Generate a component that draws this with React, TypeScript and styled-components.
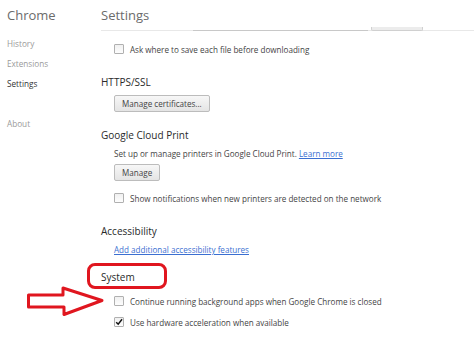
import styled, { createGlobalStyle } from 'styled-components'

const GlobalStyle = createGlobalStyle`
  html, body {
    margin: 0;
    padding: 0;
    background: #ffffff;
  }
  body {
    font-family: "Open Sans", "Noto Sans", sans-serif;
    color: #333;
    overflow: hidden;
  }
`

function Checkbox({ checked }: { checked?: boolean }) {
  return (
    <Box>
      {checked && (
        <svg width="10" height="10" viewBox="0 0 10 10">
          <path d="M1.5 5.2 L4 7.8 L8.8 1.6" fill="none" stroke="#111" strokeWidth="1.8" />
        </svg>
      )}
    </Box>
  )
}

function Arrow() {
  return (
    <ArrowSvg width="80" height="32" viewBox="0 0 80 32">
      <path
        d="M1.5 9 L36 9 L36 2 L75 14.5 L37 28.5 L37 21 L1.5 21 Z"
        fill="#fff"
        stroke="#e0161f"
        strokeWidth="3"
        strokeLinejoin="round"
      />
    </ArrowSvg>
  )
}

export default function App() {
  return (
    <Page>
      <GlobalStyle />
      <Sidebar>
        <Brand>Chrome</Brand>
        <NavList>
          <NavItem>History</NavItem>
          <NavItem>Extensions</NavItem>
          <NavItem $active>Settings</NavItem>
          <NavItem $spaced>About</NavItem>
        </NavList>
      </Sidebar>

      <Main>
        <Header>
          <Title>Settings</Title>
          <ClippedInput />
          <ClippedButton />
        </Header>

        <CheckRow $mt={10}>
          <Checkbox />
          <Label>Ask where to save each file before downloading</Label>
        </CheckRow>

        <Heading $mt={17}>HTTPS/SSL</Heading>
        <Indent>
          <Button $mt={5}>Manage certificates...</Button>
        </Indent>

        <Heading $mt={15}>Google Cloud Print</Heading>
        <Indent>
          <Text $mt={4}>
            Set up or manage printers in Google Cloud Print. <Link>Learn more</Link>
          </Text>
          <Button $mt={3}>Manage</Button>
        </Indent>
        <CheckRow $mt={9}>
          <Checkbox />
          <Label>Show notifications when new printers are detected on the network</Label>
        </CheckRow>

        <Heading $mt={17}>Accessibility</Heading>
        <Indent>
          <Text $mt={4}>
            <Link>Add additional accessibility features</Link>
          </Text>
        </Indent>

        <Heading $mt={12}>
          <Highlight />
          System
        </Heading>
        <CheckRow $mt={8}>
          <Arrow />
          <Checkbox />
          <Label>Continue running background apps when Google Chrome is closed</Label>
        </CheckRow>
        <CheckRow $mt={5}>
          <Checkbox checked />
          <Label>Use hardware acceleration when available</Label>
        </CheckRow>
      </Main>
    </Page>
  )
}

const Page = styled.div`
  display: grid;
  grid-template-columns: 101px 1fr;
  width: 474px;
  height: 339px;
  overflow: hidden;
`

const Sidebar = styled.aside`
  display: flex;
  flex-direction: column;
  padding-left: 7px;
`

const Brand = styled.div`
  height: 30px;
  line-height: 30px;
  font-size: 13px;
  color: #6b6b6b;
`

const NavList = styled.nav`
  display: flex;
  flex-direction: column;
  margin-top: 4px;
`

const NavItem = styled.div<{ $active?: boolean; $spaced?: boolean }>`
  height: 20px;
  line-height: 20px;
  font-size: 8.2px;
  color: ${({ $active }) => ($active ? '#333' : '#9a9a9a')};
  margin-top: ${({ $spaced }) => ($spaced ? '20px' : '0')};
`

const Main = styled.main`
  display: flex;
  flex-direction: column;
  align-items: flex-start;
`

const Header = styled.header`
  display: flex;
  align-items: flex-end;
  align-self: stretch;
  height: 30px;
  border-bottom: 1px solid #e8e8e8;
`

const Title = styled.h1`
  margin: 0;
  align-self: center;
  font-size: 13px;
  font-weight: 400;
  color: #6b6b6b;
`

const ClippedInput = styled.div`
  width: 175px;
  height: 2px;
  margin-left: 44px;
  margin-bottom: -1px;
  border-bottom: 1px solid #c8c8c8;
`

const ClippedButton = styled.div`
  width: 50px;
  height: 3px;
  margin-left: 3px;
  margin-bottom: -1px;
  background: #ececec;
  border: 1px solid #d0d0d0;
  border-top: none;
  border-radius: 0 0 2px 2px;
`

const Heading = styled.h2<{ $mt: number }>`
  position: relative;
  margin: ${({ $mt }) => $mt}px 0 0;
  height: 16px;
  line-height: 16px;
  font-size: 10px;
  font-weight: 400;
  color: #2a2a2a;
`

const Highlight = styled.span`
  position: absolute;
  left: -14px;
  top: -6px;
  width: 80px;
  height: 26px;
  box-sizing: border-box;
  border: 3px solid #e0161f;
  border-radius: 8px;
`

const Indent = styled.div`
  display: flex;
  flex-direction: column;
  align-items: flex-start;
  padding-left: 13px;
`

const Text = styled.div<{ $mt: number }>`
  margin-top: ${({ $mt }) => $mt}px;
  height: 14px;
  line-height: 14px;
  font-size: 8.1px;
  color: #444;
`

const Link = styled.a`
  color: #3b6fd1;
  text-decoration: underline;
  cursor: pointer;
`

const Button = styled.button<{ $mt: number }>`
  margin-top: ${({ $mt }) => $mt}px;
  height: 17px;
  padding: 0 7px;
  font-family: inherit;
  font-size: 8.1px;
  color: #444;
  background: linear-gradient(#f7f7f7, #e4e4e4);
  border: 1px solid #bcbcbc;
  border-radius: 2px;
`

const CheckRow = styled.div<{ $mt: number }>`
  position: relative;
  display: flex;
  align-items: center;
  gap: 6px;
  margin-top: ${({ $mt }) => $mt}px;
  margin-left: 13px;
  height: 16px;
`

const Box = styled.span`
  display: flex;
  align-items: center;
  justify-content: center;
  width: 10px;
  height: 10px;
  box-sizing: border-box;
  border: 1px solid #b0b0b0;
  border-radius: 1px;
  background: linear-gradient(#f0f0f0, #fdfdfd);
`

const Label = styled.span`
  font-size: 8.1px;
  color: #444;
  white-space: nowrap;
`

const ArrowSvg = styled.svg`
  position: absolute;
  left: -87px;
  top: -7px;
`
